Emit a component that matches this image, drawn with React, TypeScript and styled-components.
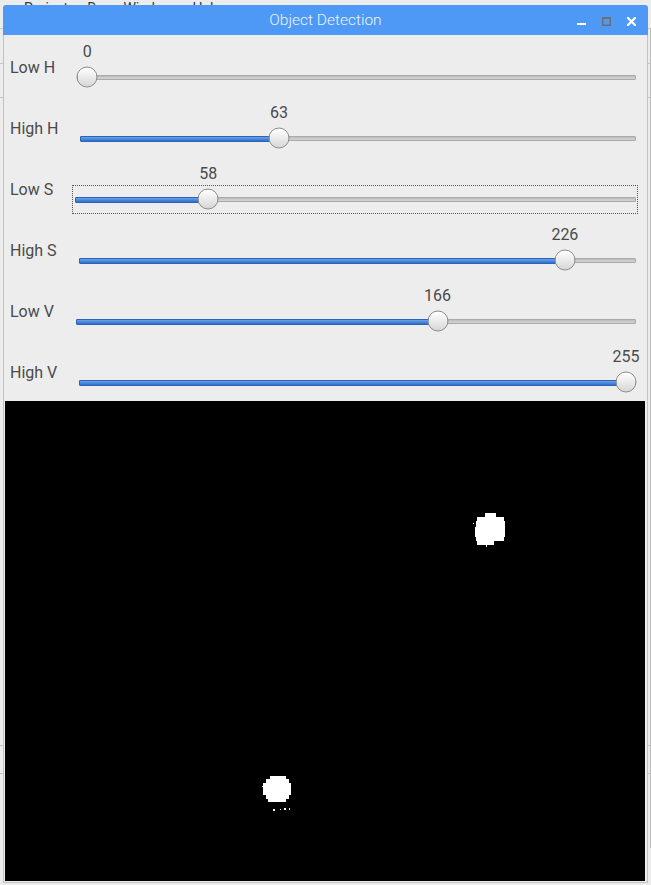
import React from "react";
import styled, { createGlobalStyle } from "styled-components";

const Global = createGlobalStyle`
  html, body { margin: 0; padding: 0; background: #ececec; }
  body { font-family: Roboto, "Liberation Sans", sans-serif; }
`;

const Desktop = styled.div`
  position: relative;
  width: 651px;
  height: 885px;
  overflow: hidden;
  background: #ececec;
`;

const MenuBar = styled.div`
  display: flex;
  gap: 12px;
  padding: 0 0 0 24px;
  height: 20px;
  margin-top: -2px;
  font-size: 14px;
  line-height: 20px;
  color: #3a3a3a;
`;

const SidePanel = styled.div`
  position: absolute;
  top: 28px;
  left: 0;
  width: 651px;
  height: 820px;
  border-top: 1px solid #c8c8c8;
  border-right: 1px solid #bdbdbd;
  box-sizing: border-box;
`;

const PanelLine = styled.div<{ $y: number }>`
  position: absolute;
  left: 0;
  width: 651px;
  top: ${(p) => p.$y}px;
  border-top: 1px solid #c4c4c4;
`;

const Window = styled.div`
  position: absolute;
  left: 3px;
  top: 5px;
  width: 645px;
  display: flex;
  flex-direction: column;
`;

const TitleBar = styled.div`
  position: relative;
  height: 30px;
  background: #4d99f5;
  border-radius: 3px 3px 0 0;
  color: #eef4fe;
  font-weight: 300;
  font-size: 15.5px;
  line-height: 31px;
  text-align: center;
`;

const TitleButtons = styled.div`
  position: absolute;
  right: 12px;
  top: 12px;
  display: flex;
  align-items: flex-start;
  gap: 16px;
`;

const Body = styled.div`
  display: flex;
  flex-direction: column;
  background: #ededed;
  border-left: 1px solid #c2c2c2;
  border-right: 1px solid #c2c2c2;
  border-bottom: 1px solid #c2c2c2;
  padding: 0 1px 1px 1px;
`;

const Row = styled.div`
  display: flex;
  height: 61px;
`;

const Label = styled.div`
  margin-top: 23px;
  padding-left: 5px;
  height: 20px;
  line-height: 20px;
  font-size: 16px;
  color: #4a4a4a;
  white-space: nowrap;
`;

const Slider = styled.div<{ $focused?: boolean }>`
  position: relative;
  flex: 1;
  margin-left: 22px;
  margin-right: 10px;
  display: flex;
  flex-direction: column;
  padding-top: 7px;
  &::before {
    content: "";
    display: ${(p) => (p.$focused ? "block" : "none")};
    position: absolute;
    top: 28px;
    bottom: 4px;
    left: -3px;
    right: -2px;
    border: 1px dotted #555;
  }
`;

const ValueLine = styled.div`
  position: relative;
  height: 20px;
`;

const Value = styled.span`
  position: absolute;
  top: 0;
  transform: translateX(-50%);
  font-size: 16px;
  line-height: 20px;
  color: #4a4a4a;
`;

const TrackArea = styled.div`
  position: relative;
  height: 30px;
  display: flex;
  align-items: center;
`;

const Track = styled.div`
  position: relative;
  flex: 1;
  height: 5px;
  box-sizing: border-box;
  background: linear-gradient(#bdbdbd, #d4d4d4);
  border: 1px solid #a9a9a9;
  border-radius: 1px;
`;

const Fill = styled.div`
  position: absolute;
  left: -1px;
  top: -1px;
  height: 6px;
  box-sizing: border-box;
  background: linear-gradient(#6aa3ea, #2f6ecb);
  border: 1px solid #2c63b8;
  border-radius: 1px;
`;

const Thumb = styled.div`
  position: absolute;
  top: 50%;
  width: 21px;
  height: 21px;
  box-sizing: border-box;
  border-radius: 50%;
  transform: translate(-50%, -50%);
  border: 1px solid #8c8c8c;
  background: linear-gradient(#ffffff, #e9e9e9 55%, #d6d6d6);
  box-shadow: inset 0 1px 0 #fff;
`;

const Canvas = styled.div`
  display: flex;
  background: #000;
  width: 640px;
  height: 480px;
`;

type SliderProps = { label: string; value: number; max: number; focused?: boolean };

function Trackbar({ label, value, max, focused }: SliderProps) {
  const pos = `calc(10px + (100% - 20px) * ${value / max})`;
  return (
    <Row>
      <Label>{label}</Label>
      <Slider $focused={focused}>
        <ValueLine>
          <Value style={{ left: pos }}>{value}</Value>
        </ValueLine>
        <TrackArea>
          <Track>
            <Fill style={{ width: `calc(11px + (100% - 20px) * ${value / max})` }} />
          </Track>
          <Thumb style={{ left: pos }} />
        </TrackArea>
      </Slider>
    </Row>
  );
}

const sliders: SliderProps[] = [
  { label: "Low H", value: 0, max: 179 },
  { label: "High H", value: 63, max: 179 },
  { label: "Low S", value: 58, max: 255, focused: true },
  { label: "High S", value: 226, max: 255 },
  { label: "Low V", value: 166, max: 255 },
  { label: "High V", value: 255, max: 255 },
];

function MinIcon() {
  return (
    <svg width="9" height="9" viewBox="0 0 9 9">
      <rect x="0" y="6" width="9" height="2" fill="#ffffff" />
    </svg>
  );
}
function MaxIcon() {
  return (
    <svg width="9" height="9" viewBox="0 0 9 9">
      <rect x="0.75" y="0.75" width="7.5" height="7.5" fill="none" stroke="#6e6e6e" strokeWidth="1.5" />
      <rect x="0" y="0" width="9" height="2" fill="#6e6e6e" />
    </svg>
  );
}
function CloseIcon() {
  return (
    <svg width="9" height="9" viewBox="0 0 9 9">
      <path d="M1 1 L8 8 M8 1 L1 8" stroke="#ffffff" strokeWidth="2.2" strokeLinecap="square" />
    </svg>
  );
}

function Frame() {
  return (
    <svg width="640" height="480" viewBox="0 0 640 480" shapeRendering="crispEdges">
      <rect width="640" height="480" fill="#000" />
      <g fill="#fff">
        <rect x="480" y="112" width="11" height="5" />
        <rect x="472" y="116" width="27" height="24" />
        <rect x="471" y="120" width="29" height="16" />
        <rect x="470" y="126" width="27" height="10" />
        <rect x="471" y="136" width="24" height="4" />
        <rect x="472" y="139" width="17" height="5" />
        <rect x="468" y="122" width="1" height="1" />
        <rect x="481" y="144" width="1" height="2" />
        <rect x="265" y="375" width="16" height="3" />
        <rect x="261" y="378" width="23" height="20" />
        <rect x="258" y="382" width="28" height="12" />
        <rect x="263" y="397" width="18" height="4" />
        <rect x="257" y="385" width="1" height="1" />
        <rect x="268" y="408" width="2" height="2" />
        <rect x="275" y="408" width="1" height="1" />
        <rect x="279" y="407" width="2" height="2" />
        <rect x="284" y="407" width="1" height="2" />
      </g>
    </svg>
  );
}

export default function App() {
  return (
    <Desktop>
      <Global />
      <MenuBar>
        <span>Projects</span>
        <span>Run</span>
        <span>Windows</span>
        <span>Help</span>
      </MenuBar>
      <SidePanel>
        <PanelLine $y={34} />
        <PanelLine $y={68} />
        <PanelLine $y={716} />
        <PanelLine $y={744} />
      </SidePanel>
      <Window>
        <TitleBar>
          Object Detection
          <TitleButtons>
            <MinIcon />
            <MaxIcon />
            <CloseIcon />
          </TitleButtons>
        </TitleBar>
        <Body>
          {sliders.map((s) => (
            <Trackbar key={s.label} {...s} />
          ))}
          <Canvas>
            <Frame />
          </Canvas>
        </Body>
      </Window>
    </Desktop>
  );
}
